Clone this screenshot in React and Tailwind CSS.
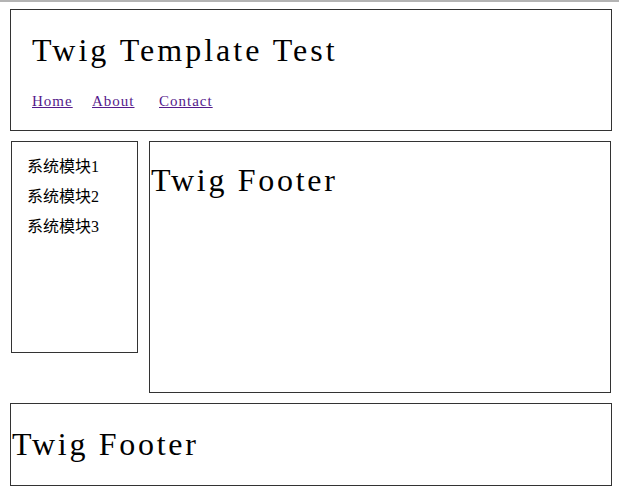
import React from "react";

const serif = { fontFamily: '"Liberation Serif", "Times New Roman", serif' };
const cjk = { fontFamily: '"Liberation Serif", "Noto Sans CJK SC", serif' };

export default function App() {
  const links = [
    { label: "Home", w: "w-[60px]" },
    { label: "About", w: "w-[67px]" },
    { label: "Contact", w: "w-[70px]" },
  ];
  const modules = ["系统模块1", "系统模块2", "系统模块3"];

  return (
    <div className="w-[619px] h-[498px] bg-white text-black overflow-hidden">
      <div className="h-[2px] bg-[#b4b4b4]" />

      {/* Header */}
      <div className="mt-[7px] ml-[10px] w-[602px] h-[122px] border border-[#333] pl-[21px] pt-[24px]">
        <div className="text-[32px] leading-[32px] h-[32px] tracking-[3px]" style={serif}>
          Twig Template Test
        </div>
        <div className="mt-[27px] flex text-[15px] leading-[16px] tracking-[1px]" style={serif}>
          {links.map((l) => (
            <div key={l.label} className={l.w}>
              <a href="#" className="text-[#551a8b] underline">
                {l.label}
              </a>
            </div>
          ))}
        </div>
      </div>

      {/* Body */}
      <div className="mt-[10px] flex items-start gap-[11px]">
        <div className="ml-[11px] w-[127px] h-[212px] border border-[#333] pl-[15px] pt-[10px]" style={cjk}>
          {modules.map((m) => (
            <div key={m} className="text-[16px] leading-[30px]">
              {m}
            </div>
          ))}
        </div>
        <div className="w-[462px] h-[252px] border border-[#333] pt-[22px] pl-[1px]">
          <div className="text-[32px] leading-[32px] tracking-[2.7px]" style={serif}>
            Twig Footer
          </div>
        </div>
      </div>

      {/* Footer */}
      <div className="mt-[10px] ml-[10px] w-[602px] h-[83px] border border-[#333] pt-[24px] pl-[1px]">
        <div className="text-[32px] leading-[32px] tracking-[2.7px]" style={serif}>
          Twig Footer
        </div>
      </div>
    </div>
  );
}
